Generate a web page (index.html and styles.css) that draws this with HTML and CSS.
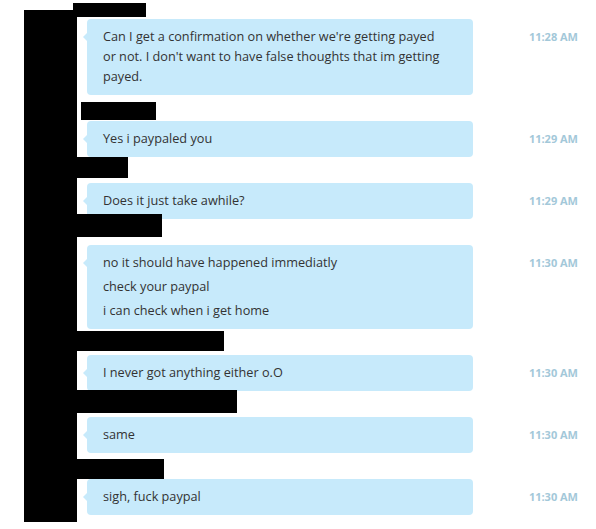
FILE: index.html
```html
<!DOCTYPE html>
<html>
<head>
<meta charset="utf-8">
<link rel="stylesheet" href="styles.css">
</head>
<body>
<div class="chat">
  <div class="bar"></div>

  <div class="name first"><i class="redact r1"></i></div>
  <div class="msg">
    <div class="bubble">
      <p>Can I get a confirmation on whether we're getting payed or not. I don't want to have false thoughts that im getting payed.</p>
    </div>
    <div class="time">11:28 AM</div>
  </div>

  <div class="name"><i class="redact r2"></i></div>
  <div class="msg">
    <div class="bubble"><p>Yes i paypaled you</p></div>
    <div class="time">11:29 AM</div>
  </div>

  <div class="name"><i class="redact r3"></i></div>
  <div class="msg">
    <div class="bubble"><p>Does it just take awhile?</p></div>
    <div class="time">11:29 AM</div>
  </div>

  <div class="name"><i class="redact r4"></i></div>
  <div class="msg">
    <div class="bubble multi">
      <p>no it should have happened immediatly</p>
      <p>check your paypal</p>
      <p>i can check when i get home</p>
    </div>
    <div class="time">11:30 AM</div>
  </div>

  <div class="name"><i class="redact r5"></i></div>
  <div class="msg">
    <div class="bubble"><p>I never got anything either o.O</p></div>
    <div class="time">11:30 AM</div>
  </div>

  <div class="name"><i class="redact r6"></i></div>
  <div class="msg">
    <div class="bubble"><p>same</p></div>
    <div class="time">11:30 AM</div>
  </div>

  <div class="name"><i class="redact r7"></i></div>
  <div class="msg">
    <div class="bubble"><p>sigh, fuck paypal</p></div>
    <div class="time">11:30 AM</div>
  </div>
</div>
</body>
</html>
```

FILE: styles.css
```css
html, body {
  margin: 0;
  padding: 0;
  background: #fff;
}

body {
  font-family: "Open Sans", "Noto Sans", sans-serif;
  color: #333;
  width: 596px;
  height: 529px;
  overflow: hidden;
}

.chat {
  position: relative;
  display: flex;
  flex-direction: column;
}

.bar {
  position: absolute;
  left: 24px;
  top: 10px;
  width: 53px;
  height: 512px;
  background: #000;
  z-index: 2;
}

.name {
  position: relative;
  height: 26px;
}

.name.first {
  height: 19px;
}

.redact {
  position: absolute;
  background: #000;
  z-index: 2;
}

.r1 { left: 73px; top: 3px; width: 73px; height: 14px; }
.r2 { left: 81px; top: 7px; width: 75px; height: 18px; }
.r3 { left: 77px; top: 0; width: 51px; height: 21px; }
.r4 { left: 77px; top: -5px; width: 85px; height: 23px; }
.r5 { left: 77px; top: 2px; width: 147px; height: 20px; }
.r6 { left: 77px; top: -1px; width: 160px; height: 23px; }
.r7 { left: 77px; top: 6px; width: 87px; height: 20px; }

.msg {
  display: flex;
  align-items: flex-start;
  padding-left: 87px;
}

.bubble {
  position: relative;
  width: 386px;
  box-sizing: border-box;
  padding: 7px 32px 9px 16px;
  background: #c7eafb;
  border-radius: 4px;
  font-size: 12.7px;
  line-height: 20px;
}

.bubble::before {
  content: "";
  position: absolute;
  left: -4px;
  top: 14px;
  border-right: 4px solid #c7eafb;
  border-top: 4px solid transparent;
  border-bottom: 4px solid transparent;
}

.bubble p {
  margin: 0;
}

.bubble.multi {
  display: flex;
  flex-direction: column;
  gap: 4px;
}

.time {
  width: 105px;
  padding-top: 11px;
  text-align: right;
  font-size: 11px;
  font-weight: bold;
  line-height: 14px;
  color: #a3c8d9;
}
```
